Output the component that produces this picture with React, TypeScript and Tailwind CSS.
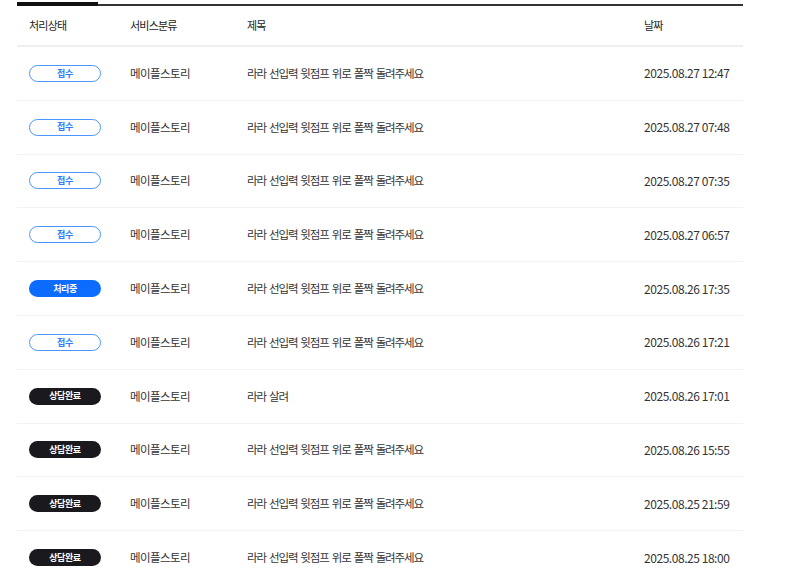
const rows: { status: 'new' | 'doing' | 'done'; title: string; date: string }[] = [
  { status: 'new', title: '라라 선입력 윗점프 위로 폴짝 돌려주세요', date: '2025.08.27 12:47' },
  { status: 'new', title: '라라 선입력 윗점프 위로 폴짝 돌려주세요', date: '2025.08.27 07:48' },
  { status: 'new', title: '라라 선입력 윗점프 위로 폴짝 돌려주세요', date: '2025.08.27 07:35' },
  { status: 'new', title: '라라 선입력 윗점프 위로 폴짝 돌려주세요', date: '2025.08.27 06:57' },
  { status: 'doing', title: '라라 선입력 윗점프 위로 폴짝 돌려주세요', date: '2025.08.26 17:35' },
  { status: 'new', title: '라라 선입력 윗점프 위로 폴짝 돌려주세요', date: '2025.08.26 17:21' },
  { status: 'done', title: '라라 살려', date: '2025.08.26 17:01' },
  { status: 'done', title: '라라 선입력 윗점프 위로 폴짝 돌려주세요', date: '2025.08.26 15:55' },
  { status: 'done', title: '라라 선입력 윗점프 위로 폴짝 돌려주세요', date: '2025.08.25 21:59' },
  { status: 'done', title: '라라 선입력 윗점프 위로 폴짝 돌려주세요', date: '2025.08.25 18:00' },
];

function Badge({ status }: { status: 'new' | 'doing' | 'done' }) {
  if (status === 'new')
    return <span className="flex h-[17px] w-[72px] items-center justify-center rounded-full border border-[#4b95ff] bg-white text-[9px] font-bold tracking-[-0.4px] text-[#2a7dff]">접수</span>;
  if (status === 'doing')
    return <span className="flex h-[17px] w-[72px] items-center justify-center rounded-full bg-[#0b6cff] text-[9px] font-bold tracking-[-0.4px] text-white">처리중</span>;
  return <span className="flex h-[17px] w-[72px] items-center justify-center rounded-full bg-[#1a1a1e] text-[9px] font-bold tracking-[-0.4px] text-white">상담완료</span>;
}

export default function App() {
  return (
    <div className="h-[581px] w-[800px] overflow-hidden bg-white pt-[2px] pl-[17px] font-['Noto_Sans_CJK_KR','Noto_Sans',sans-serif] text-[#222]">
      <div className="w-[726px]">
        {/* 탭 라인 */}
        <div className="flex h-[4px] items-end">
          <div className="h-[4px] w-[81px] bg-[#111]" />
          <div className="h-[2px] flex-1 bg-[#333]" />
        </div>
        <div className="flex h-[41px] items-center border-b-2 border-[#efeff3] text-[11px] tracking-[-0.8px] text-[#222]">
          <div className="w-[113px] pl-3">처리상태</div>
          <div className="w-[117px]">서비스분류</div>
          <div className="w-[397px]">제목</div>
          <div>날짜</div>
        </div>
        {rows.map((r, i) => (
          <div key={i} className="flex h-[53.8px] items-center border-b border-[#f3f3f5] text-[12px] text-[#333]">
            <div className="w-[113px] pl-3"><Badge status={r.status} /></div>
            <div className="w-[117px] text-[11.5px] tracking-[-0.6px]">메이플스토리</div>
            <div className="w-[397px] text-[11.5px] tracking-[-1.1px] [word-spacing:1.5px]">{r.title}</div>
            <div className="tracking-[-0.45px]">{r.date}</div>
          </div>
        ))}
      </div>
    </div>
  );
}
